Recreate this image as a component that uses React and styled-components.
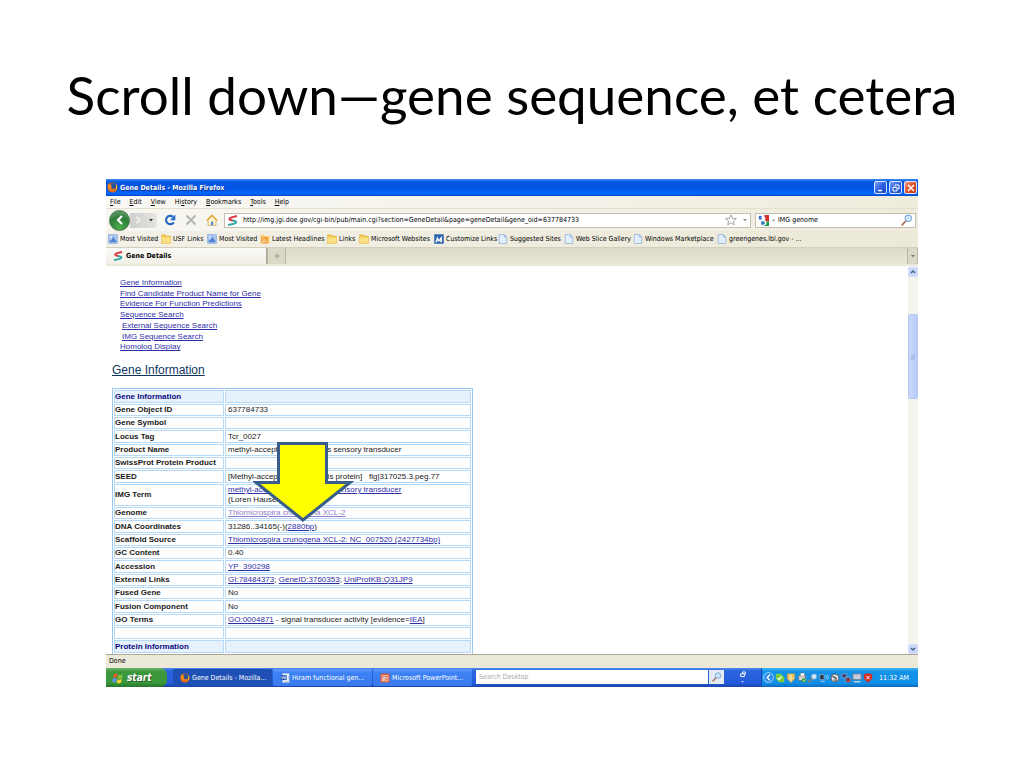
import React from 'react';
import styled, { createGlobalStyle } from 'styled-components';

const UI_FONT = '"DejaVu Sans Condensed", "DejaVu Sans", Tahoma, sans-serif';
const PAGE_FONT = '"Liberation Sans", Arial, sans-serif';

const GlobalStyle = createGlobalStyle`
  * {
    box-sizing: border-box;
  }

  body {
    margin: 0;
    background: white;
    color: black;
  }

  button,
  input {
    margin: 0;
    padding: 0;
    border: 0;
    background: none;
    color: inherit;
    font: inherit;
  }
`;

const Slide = styled.main`
  padding: 60px 106px 80px;
`;

const SlideTitle = styled.h1`
  margin: 0 -80px 49px;
  font: 400 53px/70px Lato, Carlito, Calibri, sans-serif;
  text-align: center;
  white-space: nowrap;
`;

const Window = styled.section`
  display: flex;
  flex-direction: column;
  overflow: hidden;
  background: #ece9d8;
  font: 7px/10px ${UI_FONT};
  white-space: nowrap;
`;

const Icon = styled.svg.attrs({ 'aria-hidden': true })`
  display: block;
  flex: none;
  width: ${props => props.$size || 10}px;
  height: ${props => props.$size || 10}px;
`;

/* Icons */

function FirefoxIcon({ size }) {
  return (
    <Icon viewBox="0 0 12 12" $size={size}>
      <circle cx="6" cy="6" r="5.5" fill="#e66a10" />
      <circle cx="6.6" cy="4.6" r="3.4" fill="#27519c" />
      <path d="M.7 3.2 2 1.4l1 1.4 2-.2-1 1.5 1.7.8-1.4 1.2c.4 1.8 3 2 4.5.4-.5 2.6-5.5 3.500-7.100.4C1 5.8.8 4.6.7 3.2Z" fill="#f58a16" />
      <path d="M9.500 1.8c2 2 2.200 5.500-.4 7.700 1-2 1.200-4.500.4-7.700Z" fill="#fbc832" />
    </Icon>
  );
}

function SwooshIcon({ size }) {
  return (
    <Icon viewBox="0 0 12 12" $size={size} fill="none">
      <path d="M10.8 1.2 5 2.6C2.500 3.300 2 4.500 3.600 5.200L6.500 6.200" stroke="#e0323c" strokeWidth="2.200" />
      <path d="m6 6 2.800.8c2 .7 1.400 2-.8 2.600L1.200 11" stroke="#2fa8a5" strokeWidth="2.200" />
    </Icon>
  );
}

function FolderIcon() {
  return (
    <Icon viewBox="0 0 12 12">
      <path d="M.5 1h4.500l1 1.500h5.500V11.500H.5Z" fill="#f3c64c" stroke="#e3b447" strokeWidth=".7" />
      <path d="M.8 4h10.400v7.200H.8Z" fill="#fbdf83" />
    </Icon>
  );
}

function PageIcon() {
  return (
    <Icon viewBox="0 0 12 12">
      <path d="M1.500.7h6.200L10.500 3.500v7.800h-9Z" fill="#e4effc" stroke="#8facd8" strokeWidth=".9" />
      <path d="M7.500.7v3h3" fill="#b8d0f0" stroke="#8facd8" strokeWidth=".8" />
    </Icon>
  );
}

function VisitedIcon() {
  return (
    <Icon viewBox="0 0 12 12">
      <rect x=".5" y=".5" width="11" height="11" rx="1" fill="#a9c4ee" stroke="#7fa3dc" strokeWidth=".7" />
      <path d="M2 10V7l2 1 2-5 2 3 2 2v2Z" fill="#4f82d2" />
      <circle cx="4" cy="4" r="1.200" fill="#e6f0fd" />
    </Icon>
  );
}

function FeedIcon() {
  return (
    <Icon viewBox="0 0 12 12">
      <path d="M.5 1h4.500l1 1.500h5.500V11.500H.5Z" fill="#fbd37c" />
      <rect x="1.500" y="3.500" width="8" height="8" rx="1" fill="#f39a35" />
      <circle cx="3.600" cy="9.500" r=".9" fill="white" />
      <path d="M3 7.300c1.600 0 2.800 1.100 2.800 2.800M3 5.500c2.700 0 4.600 2 4.600 4.600" fill="none" stroke="white" strokeWidth=".8" />
    </Icon>
  );
}

function CustomizeIcon() {
  return (
    <Icon viewBox="0 0 12 12">
      <rect x=".3" y=".3" width="11.400" height="11.400" fill="#2d64ad" />
      <path d="M1.500 10 4 3l2 4 3.500-5v8h-2V7L6 9.500 4.500 7.500 3.500 10Z" fill="white" />
    </Icon>
  );
}

function MagnifierIcon({ size }) {
  return (
    <Icon viewBox="0 0 12 12" $size={size}>
      <path d="m1.200 10.800 3.500-3.800" stroke="#a9735a" strokeWidth="1.800" strokeLinecap="round" />
      <circle cx="7.300" cy="4.300" r="3.300" fill="#cde6fa" stroke="#6c9dcc" />
    </Icon>
  );
}

function GoogleIcon() {
  return (
    <Icon viewBox="0 0 12 12" $size={11}>
      <path d="M0 0h6v6H0Z" fill="#f7f9ff" />
      <path d="M7 0h5v7H7Z" fill="#d5312b" />
      <path d="M6 7h6v5H6Z" fill="#259a4b" />
      <path d="M0 6h5v6H2Z" fill="#f3f6f0" />
      <path d="M1 1h3v4H1Z" fill="#356bce" />
      <path d="M4 3c4-2 4 2 2 3 4 1 3 5-1 5" fill="none" stroke="white" strokeWidth="1.500" />
      <path d="M3.500 7h3v3.500h-3Z" fill="#356bce" />
    </Icon>
  );
}

function WindowsLogo() {
  return (
    <Icon viewBox="0 0 12 12" $size={12}>
      <path d="M2 2.200c1.300-.9 2.600-.8 3.800 0L5 5.800c-1.200-.8-2.500-.8-3.900 0Z" fill="#ee5a2b" />
      <path d="M6.600 2.600c1.400.7 2.700.7 4.200 0L10 6.200c-1.500.8-2.800.7-4.200.1Z" fill="#80c341" />
      <path d="M.9 6.600c1.400-.9 2.700-.7 3.900 0L4 10.200c-1.200-.7-2.500-.8-3.900 0Z" fill="#5d94f0" />
      <path d="M5.600 7.100c1.300.7 2.700.7 4.200 0L9 10.700c-1.400.7-2.800.7-4.200 0Z" fill="#fbcf35" />
    </Icon>
  );
}

function WordIcon() {
  return (
    <Icon viewBox="0 0 12 12">
      <path d="M3 .5h8v11H3Z" fill="#f5f8fd" stroke="#9bb8e0" strokeWidth=".6" />
      <path d="M1 2.500h7v6H1Z" fill="#2b5cb5" />
      <path d="m2 4 1 3 1.500-3L6 7l1-3" fill="none" stroke="white" strokeWidth=".8" />
      <path d="M5 10h5M9 4h1.500M9 6h1.500" stroke="#7a9cd0" strokeWidth=".7" />
    </Icon>
  );
}

function PowerPointIcon() {
  return (
    <Icon viewBox="0 0 12 12">
      <rect x=".5" y=".5" width="11" height="11" rx="1.500" fill="#dd5638" />
      <path d="M2.500 3h7v6.500h-7Z" fill="none" stroke="#fbe0d8" />
      <path d="M4.500 9V5h2c1.600 0 1.600 2.300 0 2.300h-2" fill="none" stroke="white" strokeWidth="1.100" />
    </Icon>
  );
}

/* Title bar and menus */

const TitleBar = styled.header`
  display: flex;
  align-items: center;
  gap: 2px;
  height: 17px;
  padding: 0 1px;
  background: linear-gradient(#3b8cf5, #0356df 18%, #0456e8 60%, #0569fb 85%, #0348cc);
  color: white;
  font-weight: bold;
`;

const WindowName = styled.span`
  flex: 1;
  text-shadow: 1px 1px #0a2f91;
`;

const CaptionButton = styled.button`
  display: grid;
  place-items: center;
  width: 13px;
  height: 13px;
  border: 1px solid #dbe6fc;
  border-radius: 2px;
  background: ${props =>
    props.$close
      ? 'linear-gradient(135deg, #f0a186, #e04f25 50%, #c23a12)'
      : 'linear-gradient(135deg, #7fa6f5, #2e5fe0 50%, #1d4bc4)'};
`;

const MenuBar = styled.nav`
  display: flex;
  align-items: center;
  gap: 9px;
  height: 12px;
  padding: 0 4px;
  background: linear-gradient(90deg, #f9f8f5, #efecdd);
`;

const NavBar = styled.div`
  display: flex;
  align-items: center;
  height: 23px;
  padding: 0 2px 0 3px;
  border-top: 1px solid #e4e0d0;
  background: linear-gradient(90deg, #f7f6f1, #efecdd);
`;

const BackButton = styled.button`
  display: grid;
  place-items: center;
  width: 21px;
  height: 21px;
  border: 1px solid #47784a;
  border-radius: 50%;
  background: radial-gradient(circle at 50% 90%, #4cae4b, #2d7c38 55%, #7ba781);
`;

const ForwardButton = styled.button`
  display: flex;
  align-items: center;
  justify-content: space-around;
  width: 27px;
  height: 15px;
  margin-right: 2px;
  border-radius: 0 4px 4px 0;
  background: linear-gradient(90deg, #cfcfcd, #e4e3df);
`;

const ToolButton = styled.button`
  display: grid;
  place-items: center;
  width: 21px;
  height: 18px;
`;

const Field = styled.div`
  display: flex;
  align-items: center;
  gap: ${props => props.$space}px;
  flex: ${props => props.$flex || 'none'};
  width: ${props => props.$width || 'auto'};
  height: 15px;
  margin-left: ${props => props.$gap || 0}px;
  padding: 0 2px;
  border: 1px solid #c4c0ae;
  background: white;

  input {
    flex: 1;
    min-width: 0;
    outline: none;
  }
`;

const BookmarksBar = styled.nav`
  display: flex;
  align-items: center;
  height: 17px;
  padding-left: 2px;
  border-bottom: 1px solid #d3cfbc;
  background: linear-gradient(90deg, #f2f0e7, #ece9d8);
`;

const Bookmark = styled.a`
  display: flex;
  align-items: center;
  gap: 2px;
  flex: 0 0 ${props => props.$width}px;
  color: black;
  text-decoration: none;
`;

const TabStrip = styled.div`
  display: flex;
  align-items: stretch;
  height: 18px;
  border-bottom: 2px solid #eceadd;
  background: linear-gradient(#dedac8, #e9e6d6);
`;

const Tab = styled.button`
  display: flex;
  align-items: center;
  gap: 3px;
  width: 161px;
  padding-left: 7px;
  border-right: 1px solid #aaa695;
  background: linear-gradient(#fbfaf7, #f1efe5);
  font-weight: bold;
`;

const SmallTab = styled.button`
  display: grid;
  place-items: center;
  width: ${props => props.$width}px;
  margin-left: ${props => (props.$end ? 'auto' : 0)};
  border: solid #b9b5a3;
  border-width: 0 1px;
  background: #dcd8c7;
`;

/* Page */

const Viewport = styled.div`
  display: flex;
  height: 388px;
  background: white;
`;

const Page = styled.article`
  position: relative;
  flex: 1;
  overflow: hidden;
  padding: 12px 6px 0;
  font: 8px/10px ${PAGE_FONT};

  a {
    color: #2f2fa8;
  }
`;

const Contents = styled.ul`
  display: grid;
  grid-auto-rows: 1fr;
  height: 75px;
  margin: 0 0 9px;
  padding: 0 0 0 8px;
  list-style: none;
`;

const ContentsItem = styled.li`
  padding-left: ${props => (props.$nested ? 2 : 0)}px;
`;

const SectionTitle = styled.h2`
  margin: 0 0 10px;
  color: #0d3560;
  font: 400 12px/16px ${PAGE_FONT};
  text-decoration: underline;
`;

const GeneTable = styled.table`
  width: 361px;
  border: 1px solid #99c7ee;
  border-collapse: separate;
  border-spacing: 1px;
  table-layout: fixed;

  th,
  td {
    height: 12px;
    padding: 0 1px;
    border: 1px solid #b5daf7;
    text-align: left;
    vertical-align: middle;
  }

  tr:nth-child(3n + 1) > * {
    height: 13px;
  }

  th {
    padding-left: 0;
    width: 110px;
  }

  td {
    padding-left: 2px;
  }
`;

const GeneRow = styled.tr`
  background: ${props => (props.$heading ? '#e6f1fc' : 'white')};
  color: ${props => (props.$heading ? '#0a0a80' : '#1a1a1a')};
`;

const VisitedLink = styled.a`
  && {
    color: #8e7cc8;
  }
`;

const Arrow = styled.svg`
  position: absolute;
  left: 147px;
  top: 174px;
  width: 101px;
  height: 84px;
`;

const ScrollBar = styled.div`
  display: flex;
  flex-direction: column;
  width: 10px;
  padding-top: 1px;
  background: #f5f5f0;
`;

const ScrollButton = styled.button`
  display: grid;
  place-items: center;
  height: 10px;
  border: 1px solid #d3defa;
  border-radius: 2px;
  background: #c9d7fb;
`;

const ScrollTrack = styled.div`
  flex: 1;
  padding-top: 37px;
`;

const ScrollThumb = styled.div`
  display: grid;
  place-items: center;
  height: 85px;
  border: 1px solid #b3c6f4;
  border-radius: 2px;
  background: linear-gradient(90deg, #cad9fd, #b9ccf8);
`;

/* Status bar and taskbar */

const StatusBar = styled.footer`
  height: 14px;
  padding: 1px 3px;
  border-top: 1px solid #aaa797;
  background: #ece9d8;
`;

const TaskBar = styled.div`
  display: flex;
  align-items: stretch;
  height: 19px;
  background: linear-gradient(#4f8bef, #2a63de 15%, #245bdb 80%, #1a43a5);
  color: white;
`;

const StartButton = styled.button`
  display: flex;
  align-items: center;
  gap: 3px;
  width: 61px;
  margin-right: 6px;
  padding-left: 6px;
  border-radius: 0 7px 7px 0;
  background: linear-gradient(#6fb46c, #3b963b 20%, #3a9a3b 75%, #28752a);
  font: italic bold 10px/16px "DejaVu Sans Condensed", "DejaVu Sans", sans-serif;
  text-shadow: 1px 1px #2b5a2b;
`;

const Task = styled.button`
  display: flex;
  align-items: center;
  gap: 2px;
  width: 99px;
  margin: 1px 1px 1px 0;
  padding-left: 7px;
  border-radius: 2px;
  background: ${props => (props.$active ? '#1e4fb5' : 'linear-gradient(#5c9bfb, #3c81f3 25%, #3a7bee)')};
`;

const DesktopSearch = styled.form`
  display: flex;
  flex: 1;
  margin: 2px 0 3px 3px;

  input {
    flex: 1;
    min-width: 0;
    padding-left: 3px;
    background: white;
  }

  input::placeholder {
    color: #aaa;
    opacity: 1;
  }

  button {
    display: grid;
    place-items: center;
    width: 15px;
    margin-left: 1px;
    background: #e3eaf5;
  }
`;

const Language = styled.div`
  display: grid;
  place-items: center;
  width: 37px;
`;

const Tray = styled.div`
  display: flex;
  align-items: center;
  gap: 1px;
  width: 157px;
  padding-left: 1px;
  border-left: 1px solid #0d4bb0;
  background: linear-gradient(#3fb5f5, #1291e9 20%, #1290e8 80%, #0d69bf);
`;

const Clock = styled.time`
  margin-left: 5px;
`;

const BOOKMARKS = [
  { name: 'Most Visited', icon: VisitedIcon, width: 53 },
  { name: 'USF Links', icon: FolderIcon, width: 46 },
  { name: 'Most Visited', icon: VisitedIcon, width: 53 },
  { name: 'Latest Headlines', icon: FeedIcon, width: 67 },
  { name: 'Links', icon: FolderIcon, width: 32 },
  { name: 'Microsoft Websites', icon: FolderIcon, width: 75 },
  { name: 'Customize Links', icon: CustomizeIcon, width: 64 },
  { name: 'Suggested Sites', icon: PageIcon, width: 66 },
  { name: 'Web Slice Gallery', icon: PageIcon, width: 69 },
  { name: 'Windows Marketplace', icon: PageIcon, width: 84 },
  { name: 'greengenes.lbl.gov - ...', icon: PageIcon, width: 90 },
];

const SECTIONS = [
  { name: 'Gene Information' },
  { name: 'Find Candidate Product Name for Gene' },
  { name: 'Evidence For Function Predictions' },
  { name: 'Sequence Search' },
  { name: 'External Sequence Search', nested: true },
  { name: 'IMG Sequence Search', nested: true },
  { name: 'Homolog Display' },
];

const MENUS = ['File', 'Edit', 'View', 'History', 'Bookmarks', 'Tools', 'Help'];
const ACCESS_KEYS = { History: 2 };

const GENE = [
  { label: 'Gene Information', heading: true },
  { label: 'Gene Object ID', value: '637784733' },
  { label: 'Gene Symbol' },
  { label: 'Locus Tag', value: 'Tcr_0027' },
  { label: 'Product Name', value: 'methyl-accepting chemotaxis sensory transducer' },
  { label: 'SwissProt Protein Product' },
  { label: 'SEED', value: <>[Methyl-accepting chemotaxis protein] &nbsp; fig|317025.3.peg.77</> },
  {
    label: 'IMG Term',
    value: (
      <>
        <a href="#term">methyl-accepting chemotaxis sensory transducer</a>
        <br />
        (Loren Hauser)
      </>
    ),
  },
  { label: 'Genome', value: <VisitedLink href="#genome">Thiomicrospira crunogena XCL-2</VisitedLink> },
  { label: 'DNA Coordinates', value: <>31286..34165(-)(<a href="#dna">2880bp</a>)</> },
  { label: 'Scaffold Source', value: <a href="#scaffold">Thiomicrospira crunogena XCL-2: NC_007520 (2427734bp)</a> },
  { label: 'GC Content', value: '0.40' },
  { label: 'Accession', value: <a href="#accession">YP_390298</a> },
  {
    label: 'External Links',
    value: (
      <>
        <a href="#gi">GI:78484373</a>; <a href="#geneid">GeneID:3760353</a>; <a href="#uniprot">UniProtKB:Q31JP9</a>
      </>
    ),
  },
  { label: 'Fused Gene', value: 'No' },
  { label: 'Fusion Component', value: 'No' },
  {
    label: 'GO Terms',
    value: (
      <>
        <a href="#go">GO:0004871</a> - signal transducer activity [evidence=<a href="#iea">IEA</a>]
      </>
    ),
  },
  { label: '' },
  { label: 'Protein Information', heading: true },
];

function MenuItem({ name }) {
  const at = ACCESS_KEYS[name] || 0;
  return (
    <button type="button">
      {name.slice(0, at)}
      <u>{name[at]}</u>
      {name.slice(at + 1)}
    </button>
  );
}

function Chrome() {
  return (
    <>
      <TitleBar>
        <FirefoxIcon size={11} />
        <WindowName>Gene Details - Mozilla Firefox</WindowName>
        <CaptionButton aria-label="Minimize">
          <Icon viewBox="0 0 10 10">
            <path d="M2 7.500h4" stroke="white" strokeWidth="1.500" />
          </Icon>
        </CaptionButton>
        <CaptionButton aria-label="Restore">
          <Icon viewBox="0 0 10 10" fill="none" stroke="white">
            <path d="M4 3.500V2h4v4H6.500M2 4.500h4V8H2Z" />
          </Icon>
        </CaptionButton>
        <CaptionButton $close aria-label="Close">
          <Icon viewBox="0 0 10 10">
            <path d="m2 2 6 6m0-6L2 8" stroke="white" strokeWidth="1.500" />
          </Icon>
        </CaptionButton>
      </TitleBar>
      <MenuBar>{MENUS.map(name => <MenuItem key={name} name={name} />)}</MenuBar>
      <NavBar>
        <BackButton aria-label="Back">
          <Icon viewBox="0 0 12 12" $size={12}>
            <path d="M8 2 4 6l4 4" fill="none" stroke="white" strokeWidth="2.200" />
          </Icon>
        </BackButton>
        <ForwardButton aria-label="Forward">
          <Icon viewBox="0 0 12 12">
            <path d="m4 2 4 4-4 4" fill="none" stroke="#f3f3f1" strokeWidth="2" />
          </Icon>
          <Icon viewBox="0 0 6 6" $size={6}>
            <path d="M1 2h4L3 4.500Z" fill="#333" />
          </Icon>
        </ForwardButton>
        <ToolButton aria-label="Reload">
          <Icon viewBox="0 0 12 12" $size={12}>
            <path d="M9.800 8.300A4.200 4.200 0 1 1 9 2.800" fill="none" stroke="#2468c8" strokeWidth="2.200" />
            <path d="M11.300.6v5.600H6Z" fill="#2468c8" />
          </Icon>
        </ToolButton>
        <ToolButton aria-label="Stop">
          <Icon viewBox="0 0 12 12" $size={12}>
            <path d="m1.500 1.500 9 9m0-9-9 9" stroke="#b5b4b0" strokeWidth="2" />
          </Icon>
        </ToolButton>
        <ToolButton aria-label="Home">
          <Icon viewBox="0 0 12 12" $size={12}>
            <path d="M2 6v5.300h8V6L6 2Z" fill="#fdf4cf" stroke="#c9a04a" strokeWidth=".7" />
            <path d="M.7 6.500 6 1.200l5.300 5.300" fill="none" stroke="#e0a93c" strokeWidth="1.500" />
            <path d="M5 7.500h2.200v3.800H5Z" fill="#5a8ad0" />
          </Icon>
        </ToolButton>
        <Field $flex="1" $gap={2} $space={5}>
          <SwooshIcon size={11} />
          <input aria-label="Address" defaultValue="http://img.jgi.doe.gov/cgi-bin/pub/main.cgi?section=GeneDetail&page=geneDetail&gene_oid=637784733" />
          <Icon viewBox="0 0 12 12" $size={12}>
            <path d="m6 .8 1.500 3.500 3.800.3-2.900 2.500.9 3.700L6 8.800l-3.300 2 .9-3.700L.7 4.600l3.800-.3Z" fill="white" stroke="#8d8d8d" strokeWidth=".8" />
          </Icon>
          <Icon viewBox="0 0 6 6" $size={6}>
            <path d="M1 2h4L3 4.300Z" fill="#8d8d8d" />
          </Icon>
        </Field>
        <Field $width="161px" $gap={4} $space={2}>
          <GoogleIcon />
          <Icon viewBox="0 0 6 6" $size={5}>
            <path d="M1 2h4L3 4.300Z" fill="#8d8d8d" />
          </Icon>
          <input aria-label="Search" defaultValue="IMG genome" />
          <MagnifierIcon size={12} />
        </Field>
      </NavBar>
      <BookmarksBar>
        {BOOKMARKS.map(({ name, icon: BookmarkIcon, width }, i) => (
          <Bookmark href="#bookmark" key={i} $width={width}>
            <BookmarkIcon />
            {name}
          </Bookmark>
        ))}
      </BookmarksBar>
      <TabStrip>
        <Tab>
          <SwooshIcon />
          Gene Details
        </Tab>
        <SmallTab $width={19} aria-label="New tab">
          <Icon viewBox="0 0 8 8" $size={8}>
            <path d="M1.500 4h5M4 1.500v5" stroke="#9a9788" />
          </Icon>
        </SmallTab>
        <SmallTab $width={11} $end aria-label="List all tabs">
          <Icon viewBox="0 0 6 6" $size={6}>
            <path d="M1 2h4L3 4.300Z" fill="#77756a" />
          </Icon>
        </SmallTab>
      </TabStrip>
    </>
  );
}

function GenePage() {
  return (
    <Page>
      <Contents>
        {SECTIONS.map(section => (
          <ContentsItem key={section.name} $nested={section.nested}>
            <a href="#section">{section.name}</a>
          </ContentsItem>
        ))}
      </Contents>
      <SectionTitle>Gene Information</SectionTitle>
      <GeneTable>
        <tbody>
          {GENE.map((row, i) => (
            <GeneRow key={i} $heading={row.heading}>
              <th scope="row">{row.label}</th>
              <td>{row.value}</td>
            </GeneRow>
          ))}
        </tbody>
      </GeneTable>
      <Arrow viewBox="0 0 101 84" aria-hidden="true">
        <path d="M25.500 3.500H73.500V42.500H97L50 80 3 42.500H25.500Z" fill="#ffff00" stroke="#385d8a" strokeWidth="3" />
      </Arrow>
    </Page>
  );
}

function TrayIcons() {
  return (
    <>
      <Icon viewBox="0 0 12 12" $size={11}>
        <circle cx="6" cy="6" r="5.300" fill="#2a8bee" stroke="#b5dcff" />
        <path d="M7.500 3 4.500 6l3 3" fill="none" stroke="white" strokeWidth="1.500" />
      </Icon>
      <Icon viewBox="0 0 12 12">
        <path d="M1 1h6l4 4v6H5L1 7Z" fill="#79cf3e" />
        <path d="m3 6 2 2 3-4" fill="none" stroke="white" strokeWidth="1.400" />
      </Icon>
      <Icon viewBox="0 0 12 12">
        <path d="M1.500 1h9v6L6 11.500 1.500 7Z" fill="#f2c96a" stroke="#b98a2c" strokeWidth=".7" />
        <path d="M6 1v10" stroke="#fff2c0" />
      </Icon>
      <Icon viewBox="0 0 12 12">
        <path d="M2 3h8v6H2Z" fill="#d8d4cc" stroke="#6b6b70" strokeWidth=".8" />
        <path d="M4 0h5v4H4Z" fill="#f5f5f5" stroke="#777" strokeWidth=".6" />
        <circle cx="8.500" cy="9" r="2.800" fill="#2f9a3d" />
        <path d="m7 9 1.200 1.200L10 7.700" fill="none" stroke="white" />
      </Icon>
      <MagnifierIcon />
      <Icon viewBox="0 0 12 12">
        <path d="M1 2h5v6H1Z" fill="#26334d" stroke="#b9c9dd" strokeWidth=".7" />
        <path d="M2 10h5M8 3c1 1 1 3 0 4M10 2c1.500 2 1.500 4 0 6" fill="none" stroke="#d7ebff" strokeWidth=".8" />
      </Icon>
      <Icon viewBox="0 0 12 12">
        <circle cx="6" cy="6" r="4.800" fill="#dedede" stroke="#444" strokeWidth=".9" />
        <path d="m3 4 5 3M5 8.500h3" stroke="#3b3b3b" strokeWidth="1.400" />
      </Icon>
      <Icon viewBox="0 0 12 12">
        <path d="M1 1h6v5H1ZM5 5h6v5H5Z" fill="#2f467a" stroke="#a7b9d8" strokeWidth=".7" />
        <path d="m7 7 4 4m0-4-4 4" stroke="#d92b25" strokeWidth="1.500" />
      </Icon>
      <Icon viewBox="0 0 12 12">
        <path d="M1 1h10v7H1Z" fill="#c4cddc" stroke="#66748c" />
        <path d="M2 10.500h8" stroke="#e4dfdc" strokeWidth="1.500" />
      </Icon>
      <Icon viewBox="0 0 12 12">
        <path d="M1 1.500 6 .3l5 1.200V7L6 11.700 1 7Z" fill="#d62d25" />
        <path d="m4 3.500 4 4m0-4-4 4" stroke="white" strokeWidth="1.200" />
      </Icon>
    </>
  );
}

export default function App() {
  return (
    <Slide>
      <GlobalStyle />
      <SlideTitle>Scroll down—gene sequence, et cetera</SlideTitle>
      <Window>
        <Chrome />
        <Viewport>
          <GenePage />
          <ScrollBar>
            <ScrollButton aria-label="Scroll up">
              <Icon viewBox="0 0 8 8" $size={8}>
                <path d="m2 5 2-2 2 2" fill="none" stroke="#4d6185" strokeWidth="1.500" />
              </Icon>
            </ScrollButton>
            <ScrollTrack>
              <ScrollThumb>
                <Icon viewBox="0 0 8 8" $size={8}>
                  <path d="M2 2h4M2 4h4M2 6h4" stroke="#8ea8e0" strokeWidth=".8" />
                </Icon>
              </ScrollThumb>
            </ScrollTrack>
            <ScrollButton aria-label="Scroll down">
              <Icon viewBox="0 0 8 8" $size={8}>
                <path d="m2 3 2 2 2-2" fill="none" stroke="#4d6185" strokeWidth="1.500" />
              </Icon>
            </ScrollButton>
          </ScrollBar>
        </Viewport>
        <StatusBar>Done</StatusBar>
        <TaskBar>
          <StartButton>
            <WindowsLogo />
            start
          </StartButton>
          <Task $active>
            <FirefoxIcon />
            Gene Details - Mozilla...
          </Task>
          <Task>
            <WordIcon />
            Hiram functional gen...
          </Task>
          <Task>
            <PowerPointIcon />
            Microsoft PowerPoint...
          </Task>
          <DesktopSearch>
            <input aria-label="Search Desktop" placeholder="Search Desktop" />
            <button type="button" aria-label="Search">
              <MagnifierIcon />
            </button>
          </DesktopSearch>
          <Language>
            <Icon viewBox="0 0 12 14" $size={13}>
              <path d="M4 3h4v3H4ZM6 3V1h3v3" fill="none" stroke="white" />
              <path d="M4.500 11h3L6 12.500Z" fill="white" />
            </Icon>
          </Language>
          <Tray>
            <TrayIcons />
            <Clock>11:32 AM</Clock>
          </Tray>
        </TaskBar>
      </Window>
    </Slide>
  );
}
